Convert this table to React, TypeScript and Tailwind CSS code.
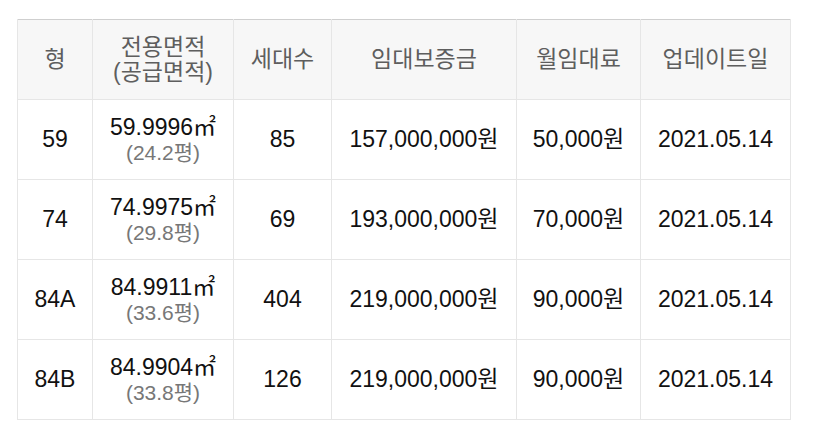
import React from "react";

const rows = [
  { t: "59", area: "59.9996", py: "24.2", n: "85", dep: "157,000,000원", rent: "50,000원", date: "2021.05.14" },
  { t: "74", area: "74.9975", py: "29.8", n: "69", dep: "193,000,000원", rent: "70,000원", date: "2021.05.14" },
  { t: "84A", area: "84.9911", py: "33.6", n: "404", dep: "219,000,000원", rent: "90,000원", date: "2021.05.14" },
  { t: "84B", area: "84.9904", py: "33.8", n: "126", dep: "219,000,000원", rent: "90,000원", date: "2021.05.14" },
];

export default function App() {
  return (
    <div
      className="w-[815px] h-[442px] bg-white pl-[17px] pt-[19px]"
      style={{ fontFamily: '"Liberation Sans", "Noto Sans CJK KR", sans-serif' }}
    >
      <table className="w-[773px] border-collapse table-fixed text-center">
        <colgroup>
          <col className="w-[75px]" />
          <col className="w-[141px]" />
          <col className="w-[98px]" />
          <col className="w-[185px]" />
          <col className="w-[124px]" />
          <col className="w-[150px]" />
        </colgroup>
        <thead>
          <tr className="h-[80px] bg-[#f7f7f7] text-[#5e5e5e] text-[23px] leading-[25px] border-t border-t-[#cfcfcf]">
            <th className="font-normal border-x border-[#e6e6e6]">형</th>
            <th className="font-normal border-x border-[#e6e6e6]">
              전용면적
              <br />
              (공급면적)
            </th>
            <th className="font-normal border-x border-[#e6e6e6]">세대수</th>
            <th className="font-normal border-x border-[#e6e6e6]">임대보증금</th>
            <th className="font-normal border-x border-[#e6e6e6]">월임대료</th>
            <th className="font-normal border-x border-[#e6e6e6]">업데이트일</th>
          </tr>
        </thead>
        <tbody className="text-[#111] text-[23px]">
          {rows.map((r) => (
            <tr key={r.t} className="h-[80px] border-t border-[#e6e6e6] last:border-b">
              <td className="border-x border-[#e6e6e6]">{r.t}</td>
              <td className="border-x border-[#e6e6e6] leading-[25px]">
                <div>{r.area}㎡</div>
                <div className="text-[#777] text-[21px]">({r.py}평)</div>
              </td>
              <td className="border-x border-[#e6e6e6]">{r.n}</td>
              <td className="border-x border-[#e6e6e6]">{r.dep}</td>
              <td className="border-x border-[#e6e6e6]">{r.rent}</td>
              <td className="border-x border-[#e6e6e6]">{r.date}</td>
            </tr>
          ))}
        </tbody>
      </table>
    </div>
  );
}
